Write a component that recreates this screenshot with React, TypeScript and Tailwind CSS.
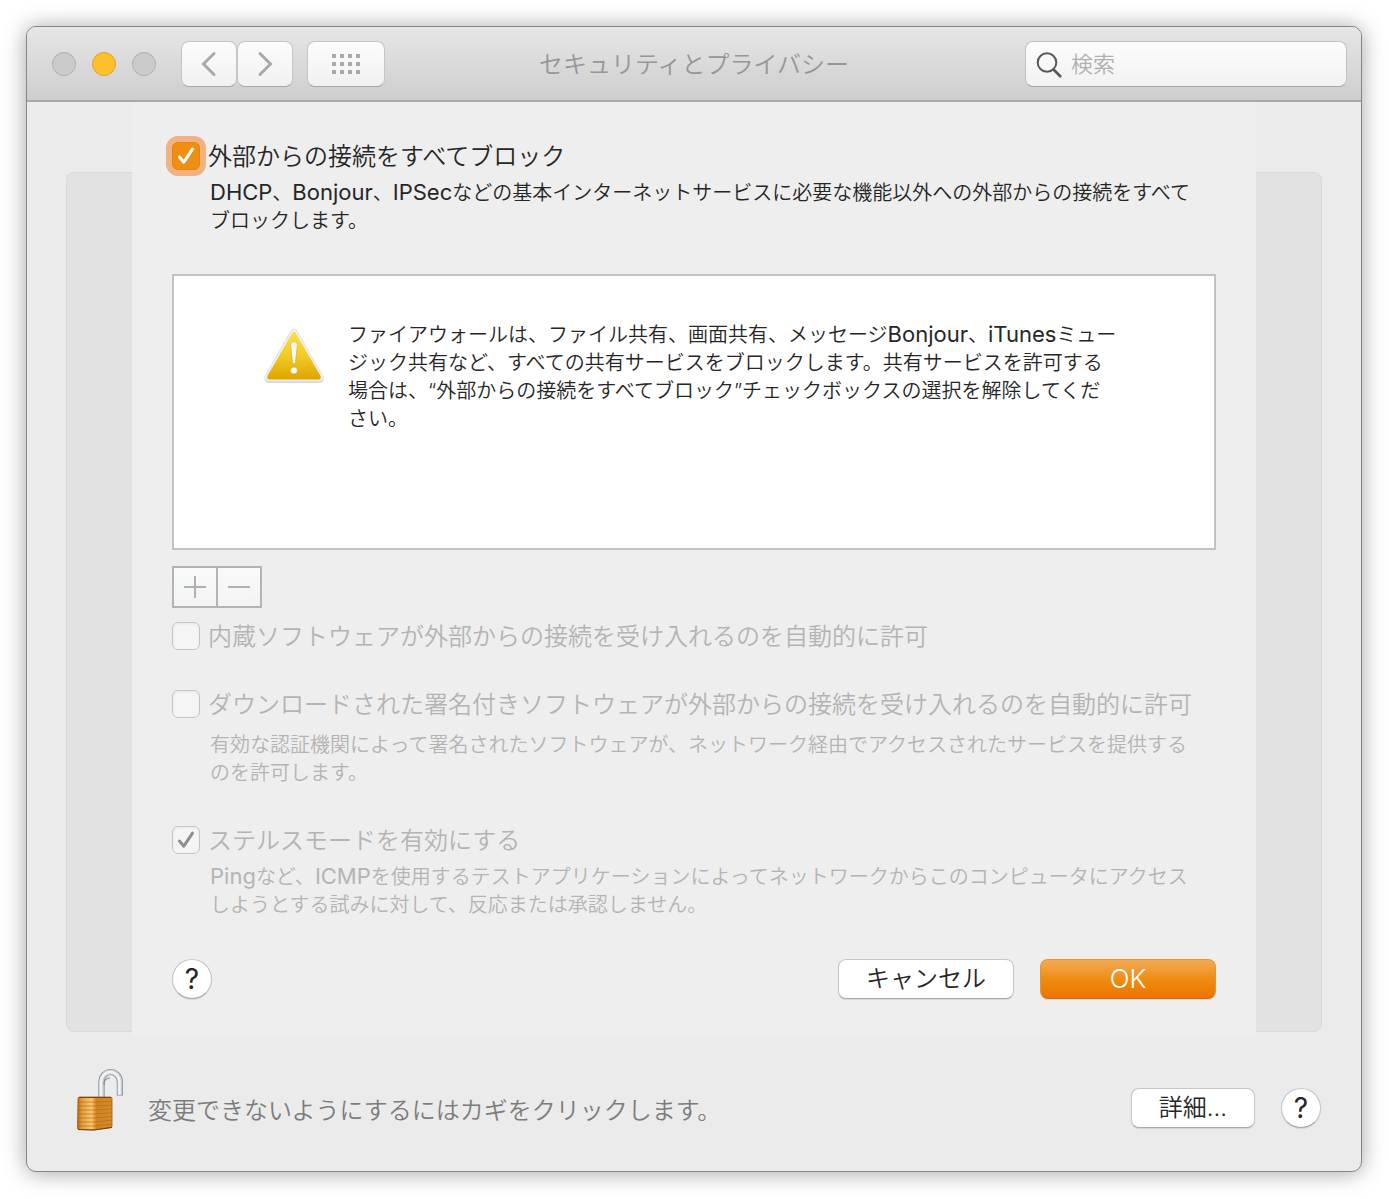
import type { ReactNode } from "react";

const App = () => {
  return (
    <div
      lang="ja"
      className="min-h-screen bg-white pt-[26px] pr-[27px] pb-[27px] pl-[26px] font-['Inter','Noto_Sans_CJK_JP',sans-serif] font-[350] text-[#262626]"
    >
      <div className="overflow-hidden rounded-[10px] border border-[#868686] bg-[#ebebeb] shadow-[0_1px_22px_rgba(0,0,0,0.36)]">
        <TitleBar />
        <main className="grid px-[39px]">
          <div className="col-start-1 row-start-1 mt-[70px] mb-[5px] rounded-lg border border-[#d9d9d9] bg-[#e2e2e2]" />
          <FirewallSheet />
        </main>
        <Footer />
      </div>
    </div>
  );
};

const TitleBar = () => (
  <header className="grid grid-cols-[1fr_auto_1fr] items-center border-b-2 border-[#a9a9a9] bg-linear-to-b from-[#e6e6e6] to-[#cecece] px-[14px] pt-[14px] pb-[13px]">
    <div className="flex items-center pl-[11px]">
      <div className="flex gap-4">
        <button aria-label="閉じる" className="size-6 rounded-full border border-[#aeafaf] bg-[#cacccc]" />
        <button aria-label="しまう" className="size-6 rounded-full border border-[#e0a127] bg-[#ffc02f]" />
        <button aria-label="拡大" className="size-6 rounded-full border border-[#aeafaf] bg-[#cacccc]" />
      </div>
      <div className="ml-[25px] flex">
        <ToolbarButton label="戻る" width="w-14">
          <svg width="16" height="26" viewBox="0 0 16 26" fill="none" stroke="#a9a9a9" strokeWidth="3" strokeLinecap="round">
            <path d="M13 2.500 2.500 13 13 23.500" />
          </svg>
        </ToolbarButton>
        <ToolbarButton label="進む" width="w-14">
          <svg width="16" height="26" viewBox="0 0 16 26" fill="none" stroke="#a9a9a9" strokeWidth="3" strokeLinecap="round">
            <path d="M3 2.500 13.500 13 3 23.500" />
          </svg>
        </ToolbarButton>
      </div>
      <div className="ml-[14px]">
        <ToolbarButton label="すべてを表示" width="w-[78px]">
          <svg width="28" height="20" viewBox="0 0 28 20" fill="#a9a9a9">
            {[0, 8, 16].map((y) =>
              [0, 8, 16, 24].map((x) => <rect key={`${x}-${y}`} x={x} y={y} width="4" height="4" />)
            )}
          </svg>
        </ToolbarButton>
      </div>
    </div>
    <h1 className="pt-0.5 text-2xl text-[#969696]">セキュリティとプライバシー</h1>
    <label className="flex h-[46px] w-[322px] items-center justify-self-end rounded-lg border border-[#c2c2c2] border-b-[#a6a6a6] bg-linear-to-b from-[#fcfcfc] to-[#f2f2f2] pl-[10px]">
      <svg width="27" height="28" viewBox="0 0 27 28" fill="none" stroke="#575757" strokeWidth="2" className="shrink-0">
        <circle cx="11" cy="12.500" r="9.300" />
        <path d="m17.500 19.500 7.500 7.500" strokeWidth="2.600" />
      </svg>
      <input
        type="search"
        placeholder="検索"
        aria-label="検索"
        className="ml-2 min-w-0 flex-1 bg-transparent text-[22px] leading-7 outline-none placeholder:text-[#b0b0b0]"
      />
    </label>
  </header>
);

const ToolbarButton = ({ label, width, children }: { label: string; width: string; children: ReactNode }) => (
  <button
    aria-label={label}
    className={`flex h-[46px] items-center justify-center rounded-lg border border-[#c6c6c6] border-b-[#a6a6a6] bg-linear-to-b from-[#fcfcfc] to-[#f1f1f1] ${width}`}
  >
    {children}
  </button>
);

// Latin words run slightly larger than the kana around them
const Latin = ({ children }: { children: ReactNode }) => (
  <span className="text-[22px] leading-none font-normal">{children}</span>
);

const FirewallSheet = () => (
  <section className="z-10 col-start-1 row-start-1 mx-[66px] bg-[#eeeeee] px-10 pt-[39px] pb-[38px]">
    <Option id="block-all" label="外部からの接続をすべてブロック" checked active />
    <p className="mt-2 pl-[38px] text-xl leading-7">
      <Latin>DHCP</Latin>、<Latin>Bonjour</Latin>、<Latin>IPSec</Latin>
      などの基本インターネットサービスに必要な機能以外への外部からの接続をすべて
      <br />
      ブロックします。
    </p>

    <div className="mt-[39px] flex border-2 border-[#c2c2c2] bg-white pt-[45px] pr-20 pb-[115px] pl-[88px]">
      <WarningIcon />
      <p className="ml-[22px] text-xl leading-7">
        ファイアウォールは、ファイル共有、画面共有、メッセージ
        <Latin>Bonjour</Latin>、<Latin>iTunes</Latin>ミュー
        <br />
        ジック共有など、すべての共有サービスをブロックします。共有サービスを許可する
        <br />
        場合は、“外部からの接続をすべてブロック”チェックボックスの選択を解除してくだ
        <br />
        さい。
      </p>
    </div>

    <div className="mt-4 flex w-[90px] divide-x-2 divide-[#b4b4b4] border-2 border-[#b4b4b4] bg-linear-to-b from-[#f9fafa] to-[#f3f3f3]">
      <button disabled aria-label="追加" className="flex h-[38px] flex-1 items-center justify-center">
        <svg width="22" height="22" viewBox="0 0 22 22" stroke="#b0b0b0" strokeWidth="2">
          <path d="M11 0v22M0 11h22" />
        </svg>
      </button>
      <button disabled aria-label="削除" className="flex h-[38px] flex-1 items-center justify-center">
        <svg width="22" height="22" viewBox="0 0 22 22" stroke="#b0b0b0" strokeWidth="2">
          <path d="M0 11h22" />
        </svg>
      </button>
    </div>

    <div className="mt-[13px]">
      <Option id="built-in" label="内蔵ソフトウェアが外部からの接続を受け入れるのを自動的に許可" />
    </div>

    <div className="mt-[38px]">
      <Option id="signed" label="ダウンロードされた署名付きソフトウェアが外部からの接続を受け入れるのを自動的に許可" />
      <p className="mt-3 pl-[38px] text-xl leading-7 text-[#b4b4b4]">
        有効な認証機関によって署名されたソフトウェアが、ネットワーク経由でアクセスされたサービスを提供する
        <br />
        のを許可します。
      </p>
    </div>

    <div className="mt-[38px]">
      <Option id="stealth" label="ステルスモードを有効にする" checked />
      <p className="mt-2 pl-[38px] text-xl leading-7 text-[#b4b4b4]">
        <Latin>Ping</Latin>など、<Latin>ICMP</Latin>
        を使用するテストアプリケーションによってネットワークからこのコンピュータにアクセス
        <br />
        しようとする試みに対して、反応または承認しません。
      </p>
    </div>

    <div className="mt-10 flex items-center">
      <HelpButton />
      <button className="ml-auto h-10 w-44 rounded-lg border border-[#c6c6c6] border-b-[#a9a9a9] bg-white text-2xl leading-9 shadow-[0_1px_1px_rgba(0,0,0,0.1)]">
        キャンセル
      </button>
      <button className="ml-[26px] h-10 w-44 rounded-lg border border-[#e39434] border-b-[#e06d00] bg-linear-to-b from-[#f2aa50] via-[#ee8d0f] to-[#ee7300] text-[26px] leading-9 text-white shadow-[0_1px_1px_rgba(0,0,0,0.1)]">
        OK
      </button>
    </div>
  </section>
);

interface OptionProps {
  id: string;
  label: string;
  checked?: boolean;
  active?: boolean;
}

const Option = ({ id, label, checked = false, active = false }: OptionProps) => (
  <div className="flex items-center gap-2">
    <span className="grid size-7 shrink-0">
      <input
        id={id}
        type="checkbox"
        defaultChecked={checked}
        disabled={!active}
        className={`col-start-1 row-start-1 size-7 appearance-none rounded-md border ${
          active
            ? "border-[#ee7f00] bg-[#ec8f14] ring-6 ring-[#f1b183] outline-none"
            : "border-[#c6c6c6] bg-[#f5f5f5] shadow-[inset_0_1px_3px_rgba(0,0,0,0.06)]"
        }`}
      />
      {checked && (
        <svg
          viewBox="0 0 28 28"
          fill="none"
          stroke={active ? "#ffffff" : "#8e8e8e"}
          strokeWidth="3"
          strokeLinecap="round"
          strokeLinejoin="round"
          className="pointer-events-none col-start-1 row-start-1 size-7"
        >
          <path d="m7.500 15 4.300 5.200 8.700-13" />
        </svg>
      )}
    </span>
    <label htmlFor={id} className={`pt-0.5 text-2xl leading-7 ${active ? "" : "text-[#b4b4b4]"}`}>
      {label}
    </label>
  </div>
);

const HelpButton = () => (
  <button
    aria-label="ヘルプ"
    className="size-10 rounded-full border border-[#c6c6c6] border-b-[#a9a9a9] bg-white text-[28px] leading-9 font-normal shadow-[0_1px_1px_rgba(0,0,0,0.1)]"
  >
    ?
  </button>
);

const Footer = () => (
  <footer className="flex items-center pt-[31px] pr-10 pb-[23px] pl-[49px]">
    <LockIcon />
    <p className="ml-[23px] pt-1.5 text-2xl text-[#7c7c7c]">変更できないようにするにはカギをクリックします。</p>
    <button className="ml-auto h-10 w-[124px] rounded-lg border border-[#c6c6c6] border-b-[#a9a9a9] bg-white text-2xl leading-9 shadow-[0_1px_1px_rgba(0,0,0,0.1)]">
      詳細...
    </button>
    <div className="ml-[26px] flex">
      <HelpButton />
    </div>
  </footer>
);

const WarningIcon = () => (
  <svg width="64" height="68" viewBox="0 0 64 68" className="shrink-0">
    <defs>
      <linearGradient id="warn" x1="0" y1="0" x2="0" y2="1">
        <stop offset="0" stopColor="#fbe23c" />
        <stop offset="0.5" stopColor="#f2cb26" />
        <stop offset="1" stopColor="#dfa400" />
      </linearGradient>
    </defs>
    <path
      d="M28.6 11.5Q32 6 35.4 11.5L60.5 55.5Q63.5 61.5 57 61.8H7Q.5 61.5 3.5 55.5Z"
      fill="#b5b5b5"
      opacity="0.7"
    />
    <path
      d="M28.6 10.5Q32 5 35.4 10.5L60.5 54.5Q63.3 60 57 60.5H7Q.7 60 3.5 54.5Z"
      fill="#efefef"
      stroke="#dcdcdc"
      strokeWidth="0.8"
    />
    <path d="M30 12.5Q32 9.2 34 12.5L58.3 54.5Q60 58.3 56.3 58.6H7.7Q4 58.3 5.7 54.5Z" fill="url(#warn)" />
    <path d="M28.6 23.5Q28.6 20.5 32 20.5t3.4 3L33.5 41.5Q32 44 30.5 41.5Z" fill="#f6f6f2" stroke="#c79b22" strokeWidth="0.5" />
    <circle cx="32" cy="49.5" r="3.5" fill="#f6f6f2" stroke="#c79b22" strokeWidth="0.5" />
  </svg>
);

const LockIcon = () => (
  <svg width="49" height="80" viewBox="0 0 49 80" className="shrink-0">
    <defs>
      <linearGradient id="brass" x1="0" y1="0" x2="1" y2="0">
        <stop offset="0" stopColor="#b06a14" />
        <stop offset="0.12" stopColor="#e39a3a" />
        <stop offset="0.4" stopColor="#fbc873" />
        <stop offset="0.48" stopColor="#eda143" />
        <stop offset="0.55" stopColor="#cf8322" />
        <stop offset="1" stopColor="#d98b25" />
      </linearGradient>
    </defs>
    <path d="M25.5 31V14a9.2 10 0 0 1 18.4 0v13.5" fill="none" stroke="#85898c" strokeWidth="6.2" />
    <path d="M25.5 31V14a9.200 10 0 0 1 18.400 0v12.700" fill="none" stroke="#c6cdd1" strokeWidth="4.800" />
    <path d="M25 31V14a9.200 10 0 0 1 18.400 0v12.700" fill="none" stroke="#f1f4f6" strokeWidth="2.600" />
    <path d="M28 17c0-4 2-7 6-7" fill="none" stroke="#7b8083" strokeWidth="1.500" opacity="0.6" />
    <path d="M2 30.5Q2 29 4 29h30q2 0 2 1.500V58q0 1.500-1.500 1.800L18 62 3 61.500q-1.500 0-1.500-1.500Z" fill="url(#brass)" stroke="#9c5b10" strokeWidth="0.8" />
    <path
      d="M2 34h15.500l18-.5M2 38h15.500l18-.7M2 42h15.500l18-1M2 46h15.500l18-1.200M2 50h15.500l18-1.500M2 54h15.500l18-1.700M2 58h15.500l18-2"
      fill="none"
      stroke="#ad6512"
      strokeWidth="1"
      opacity="0.6"
    />
    <path d="M3 29.500h32" stroke="#77450c" strokeWidth="1" />
    <path d="M2 61.500 18 62l18-2.700" fill="none" stroke="#7a4209" strokeWidth="1" />
  </svg>
);

export default App;
